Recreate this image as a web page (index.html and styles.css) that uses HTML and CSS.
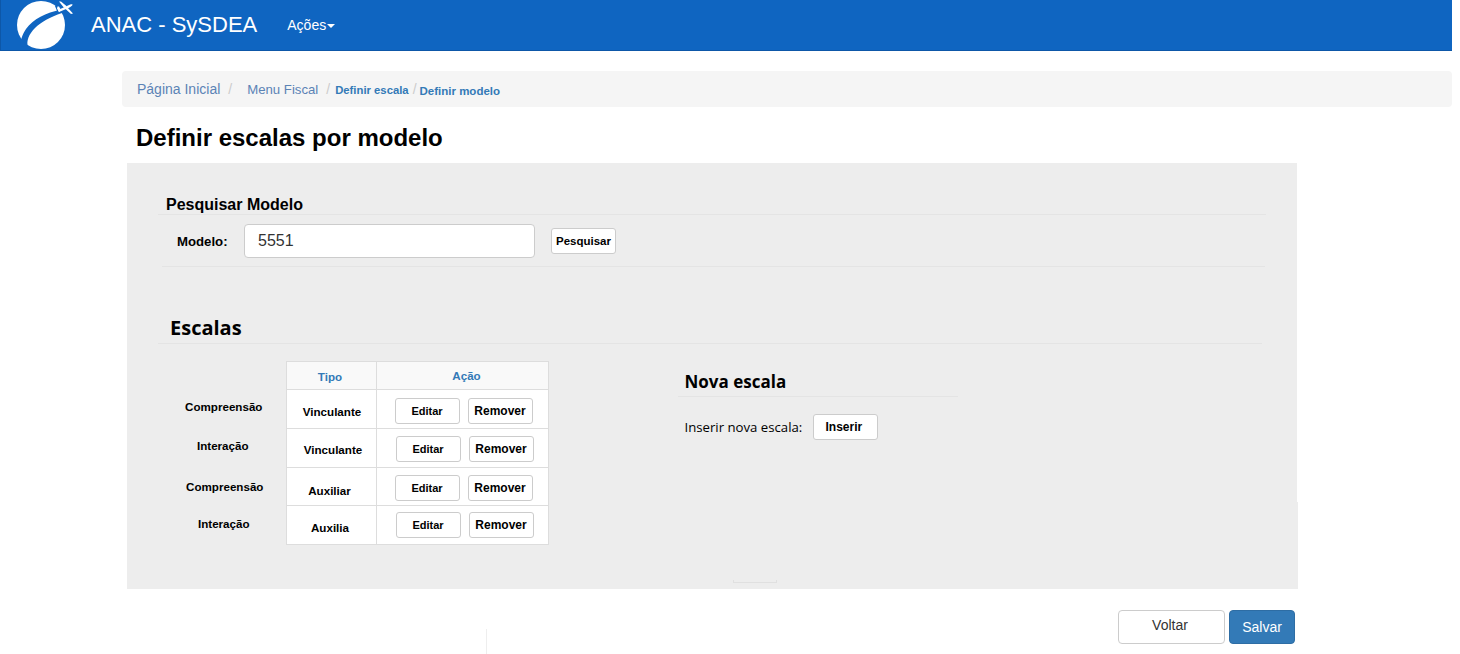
FILE: index.html
```html
<!DOCTYPE html>
<html lang="pt-BR">
<head>
    <meta charset="UTF-8">
    <title>ANAC - SySDEA</title>
    <link rel="stylesheet" href="styles.css">
</head>
<body>

    <nav class="navbar">
        <svg class="logo" width="80" height="50" viewBox="0 0 80 50">
            <circle cx="41" cy="25" r="24" fill="#fff"/>
            <path d="M61 9.500 C46 13 33 19 26 29 C22 35 20 41 21 46 L28 47 C26 41 29 34 35 28 C41 22 50 17 62 13 Z" fill="#0f65c1"/>
            <path d="M55 6 L80 0 L80 12 L62 13 L57 11 Z" fill="#0f65c1"/>
            <path d="M58 10 L68 5.500 C70.500 4.300 72.500 4 72.500 4.800 C72.500 5.800 70.500 7 68.500 8 L59 12 Z" fill="#fff"/>
            <path d="M59 1.500 L61 1.500 L67 6.500 L64 7.800 Z M64.500 8 L67 7 L73 13.500 L71 14 Z M57.500 6.500 L59 6.500 L61 10 L59 12 L57 8.500 Z" fill="#fff"/>
        </svg>
        <a class="brand" href="#">ANAC - SySDEA</a>
        <a class="nav-link" href="#">Ações<span class="caret"></span></a>
    </nav>

    <div class="breadcrumb">
        <a class="crumb" href="#">Página Inicial</a>
        <span class="sep sep-wide">/</span>
        <a class="crumb crumb-menu" href="#">Menu Fiscal</a>
        <span class="sep sep-menu">/</span>
        <a class="crumb-small" href="#">Definir escala</a>
        <span class="sep sep-tight">/</span>
        <a class="crumb-small crumb-low" href="#">Definir modelo</a>
    </div>

    <h1 class="page-title">Definir escalas por modelo</h1>

    <div class="panel">
        <h3 class="search-title">Pesquisar Modelo</h3>
        <div class="search-row">
            <label class="search-label" for="modelo">Modelo:</label>
            <input class="search-input" id="modelo" type="text" value="5551">
            <button class="btn btn-search">Pesquisar</button>
        </div>

        <h2 class="scales-title">Escalas</h2>

        <div class="scales">
            <table class="scale-table">
                <tr class="row-head">
                    <td class="name"></td>
                    <th class="col-type">Tipo</th>
                    <th class="col-action">Ação</th>
                </tr>
                <tr class="row-a">
                    <td class="name"><span class="name-a">Compreensão</span></td>
                    <td class="type"><span class="type-a">Vinculante</span></td>
                    <td class="actions">
                        <div class="btns">
                            <button class="btn btn-edit">Editar</button>
                            <button class="btn btn-remove">Remover</button>
                        </div>
                    </td>
                </tr>
                <tr class="row-b">
                    <td class="name"><span class="name-b">Interação</span></td>
                    <td class="type"><span class="type-b">Vinculante</span></td>
                    <td class="actions">
                        <div class="btns shift">
                            <button class="btn btn-edit">Editar</button>
                            <button class="btn btn-remove">Remover</button>
                        </div>
                    </td>
                </tr>
                <tr class="row-c">
                    <td class="name"><span class="name-c">Compreensão</span></td>
                    <td class="type"><span class="type-c">Auxiliar</span></td>
                    <td class="actions">
                        <div class="btns">
                            <button class="btn btn-edit">Editar</button>
                            <button class="btn btn-remove">Remover</button>
                        </div>
                    </td>
                </tr>
                <tr class="row-d">
                    <td class="name"><span class="name-d">Interação</span></td>
                    <td class="type"><span class="type-d">Auxilia</span></td>
                    <td class="actions">
                        <div class="btns shift">
                            <button class="btn btn-edit">Editar</button>
                            <button class="btn btn-remove">Remover</button>
                        </div>
                    </td>
                </tr>
            </table>

            <div class="new-scale">
                <h3 class="new-title">Nova escala</h3>
                <div class="new-row">
                    <span>Inserir nova escala:</span>
                    <button class="btn btn-insert">Inserir</button>
                </div>
            </div>
        </div>
        <div class="panel-mark"></div>
        <div class="panel-edge"></div>
    </div>

    <div class="footer">
        <div class="footer-mark"></div>
        <button class="btn-big btn-back">Voltar</button>
        <button class="btn-big btn-save">Salvar</button>
    </div>

</body>
</html>
```

FILE: styles.css
```css
* {
    box-sizing: border-box;
}
html, body {
    height: 654px;
    overflow: hidden;
}
body {
    margin: 0;
    font-family: "Liberation Sans", Arial, sans-serif;
    background-color: #fff;
    color: #000;
}
a {
    text-decoration: none;
}

.navbar {
    display: flex;
    align-items: center;
    width: 1452px;
    height: 51px;
    background-color: #0f65c1;
    border: 1px solid #0d57a8;
    border-width: 0 0 1px 1px;
}
.logo {
    flex: none;
    margin-left: -1px;
}
.brand {
    margin-left: 11px;
    font-size: 22px;
    color: #fff;
}
.nav-link {
    margin-left: 30px;
    font-size: 14px;
    color: #fff;
}
.caret {
    display: inline-block;
    margin-left: 1px;
    vertical-align: middle;
    border-top: 4px solid #fff;
    border-left: 4px solid transparent;
    border-right: 4px solid transparent;
}

.breadcrumb {
    display: flex;
    align-items: center;
    width: 1330px;
    height: 36px;
    margin: 20px 0 0 122px;
    padding-left: 15px;
    background-color: #f5f5f5;
    border-radius: 4px;
    font-size: 14px;
}
.crumb {
    color: #5b83b5;
}
.crumb-menu {
    font-size: 13.200px;
}
.crumb-small {
    font-size: 11.300px;
    font-weight: bold;
    color: #337ab7;
    margin-top: 2px;
}
.crumb-low {
    margin-top: 3px;
    font-size: 11.500px;
}
.sep {
    margin: 0 4px 0 8px;
    color: #ccc;
}
.sep-wide {
    margin: 0 15px 0 8px;
}
.sep-menu {
    margin: 0 5px 0 8px;
}
.sep-tight {
    margin: 0 3px 0 4px;
}

.page-title {
    margin: 16px 0 0 136px;
    height: 40px;
    font-size: 24px;
    line-height: 30px;
}

.panel {
    position: relative;
    width: 1170px;
    height: 426px;
    margin-left: 127px;
    padding-top: 31px;
    background-color: #ededed;
}
/* stray marks left on the panel and page */
.panel-mark {
    position: absolute;
    left: 606px;
    top: 417px;
    width: 44px;
    height: 3px;
    border: 1px solid #e0e0e0;
    border-top: 0;
}
.panel-edge {
    position: absolute;
    left: 100%;
    top: 339px;
    bottom: 0;
    width: 1px;
    background-color: #ededed;
}
.footer-mark {
    position: absolute;
    left: 486px;
    top: 629px;
    width: 1px;
    height: 25px;
    background-color: #eee;
}

.search-title {
    margin: 0 31px 0 31px;
    padding: 0 0 1px 8px;
    height: 21px;
    font-size: 16px;
    line-height: 21px;
    border-bottom: 1px solid #e4e4e4;
}
.search-row {
    display: flex;
    align-items: center;
    height: 52px;
    margin: 0 32px 0 35px;
    padding-left: 15px;
    border-bottom: 1px solid #e4e4e4;
}
.search-label {
    width: 67px;
    padding-top: 1px;
    font-size: 13.200px;
    font-weight: bold;
}
.search-input {
    width: 291px;
    height: 34px;
    padding: 0 13px;
    border: 1px solid #ccc;
    border-radius: 4px;
    background-color: #fff;
    font-family: "Liberation Sans", Arial, sans-serif;
    font-size: 16px;
    color: #333;
}
.btn {
    height: 26px;
    padding: 0;
    background-color: #fff;
    border: 1px solid #ccc;
    border-radius: 3px;
    font-family: "Liberation Sans", Arial, sans-serif;
    font-weight: bold;
    color: #000;
}
.btn-search {
    width: 65px;
    margin: 0 0 0 16px;
    font-size: 11.500px;
}

.scales-title {
    margin: 47px 35px 0 31px;
    padding-left: 12px;
    height: 30px;
    font-family: "Open Sans", sans-serif;
    font-size: 20px;
    font-weight: 700;
    line-height: 28px;
    border-bottom: 1px solid #e4e4e4;
}

.scales {
    display: flex;
    padding: 17px 0 0 33px;
}
.scale-table {
    flex: none;
    border-collapse: collapse;
    font-size: 11.600px;
    font-weight: bold;
}
.scale-table td,
.scale-table th {
    padding: 0;
    border: 1px solid #ddd;
    background-color: #fff;
    vertical-align: top;
}
.scale-table .name {
    width: 126px;
    border: 0;
    border-right: 1px solid #ddd;
    background-color: transparent;
    text-align: center;
}
.scale-table th {
    background-color: #f9f9f9;
    color: #337ab7;
    font-weight: bold;
    padding-top: 8px;
}
.scale-table .col-type {
    width: 90px;
    padding-right: 2px;
}
.scale-table .col-action {
    width: 172px;
    padding: 7px 0 0 9px;
}
.row-head {
    height: 28px;
}
.row-a {
    height: 39px;
}
.row-b {
    height: 39px;
}
.row-c {
    height: 38px;
}
.row-d {
    height: 39px;
}
.type {
    text-align: center;
}
.name span,
.type span {
    display: block;
}
.name-a { padding: 10px 0 0 2px; }
.name-b { padding: 10px 0 0 0; }
.name-c { padding: 12px 0 0 4px; }
.name-d { padding: 11px 0 0 2px; }
.type-a { padding: 15px 0 0 2px; }
.type-b { padding: 14px 0 0 4px; }
.type-c { padding: 16px 3px 0 0; }
.type-d { padding: 15px 2px 0 0; }

.actions {
    padding-top: 8px !important;
}
.row-b .actions,
.row-c .actions {
    padding-top: 7px !important;
}
.row-d .actions {
    padding-top: 6px !important;
}
.btns {
    display: flex;
    gap: 8px;
    padding-left: 18px;
}
.btns.shift {
    padding-left: 19px;
}
.btn-edit {
    width: 65px;
    font-size: 11px;
}
.btn-remove {
    width: 65px;
    font-size: 12px;
}

.new-scale {
    width: 280px;
    margin-left: 129px;
}
.new-title {
    margin: 8px 0 0 0;
    padding-left: 7px;
    height: 28px;
    font-family: "Open Sans", sans-serif;
    font-size: 17px;
    font-weight: 700;
    line-height: 26px;
    border-bottom: 1px solid #e4e4e4;
}
.new-row {
    display: flex;
    align-items: center;
    gap: 11px;
    margin-top: 17px;
    padding-left: 7px;
    font-family: "Open Sans", sans-serif;
    font-size: 13.200px;
}
.btn-insert {
    width: 65px;
    padding-right: 4px;
    font-size: 12px;
}

.footer {
    display: flex;
    gap: 4px;
    margin: 21px 0 0 1118px;
}
.btn-big {
    height: 34px;
    border-radius: 4px;
    font-family: "Liberation Sans", Arial, sans-serif;
    font-size: 14px;
}
.btn-back {
    width: 107px;
    background-color: #fff;
    border: 1px solid #ccc;
    color: #333;
    padding: 0 3px 4px 0;
}
.btn-save {
    width: 66px;
    background-color: #337ab7;
    border: 1px solid #2e6da4;
    color: #fff;
}
```
